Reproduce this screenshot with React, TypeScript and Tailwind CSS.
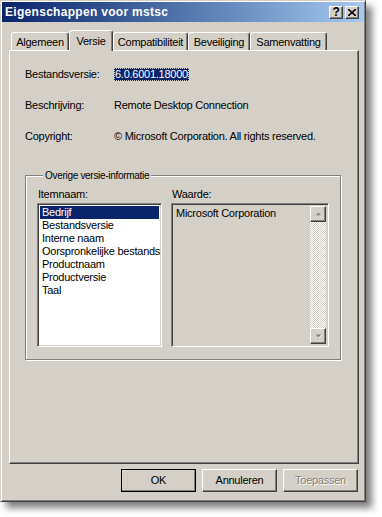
import { useState } from "react";

const raised =
  "border border-t-white border-l-white border-r-[#404040] border-b-[#404040] shadow-[inset_-1px_-1px_#808080]";
const sunken =
  "border border-t-[#808080] border-l-[#808080] border-r-white border-b-white shadow-[inset_1px_1px_#404040,inset_-1px_-1px_#d4d0c8]";

const tabs = [
  { label: "Algemeen", w: "w-[58px]" },
  { label: "Versie", w: "w-[44px]" },
  { label: "Compatibiliteit", w: "w-[75px]" },
  { label: "Beveiliging", w: "w-[62px]" },
  { label: "Samenvatting", w: "w-[77px]" },
];

const items = [
  "Bedrijf",
  "Bestandsversie",
  "Interne naam",
  "Oorspronkelijke bestands",
  "Productnaam",
  "Productversie",
  "Taal",
];

const CaptionButton = ({ children }: { children: React.ReactNode }) => (
  <div
    className={`w-[14px] h-[13px] bg-[#d4d0c8] flex items-center justify-center text-black font-bold text-[12px] leading-none ${raised}`}
  >
    {children}
  </div>
);

const ScrollButton = ({ up }: { up?: boolean }) => (
  <div
    className={`w-[16px] h-[16px] bg-[#d4d0c8] flex items-center justify-center ${raised}`}
  >
    <svg width="7" height="5" viewBox="0 0 7 5">
      {up ? (
        <>
          <path d="M4 1 L7 4 L1 4 Z" fill="#fff" />
          <path d="M3.5 0.5 L6.5 3.5 L0.5 3.5 Z" fill="#808080" />
        </>
      ) : (
        <>
          <path d="M1 1 L7 1 L4 4 Z" fill="#fff" />
          <path d="M0.5 0.5 L6.5 0.5 L3.5 3.5 Z" fill="#808080" />
        </>
      )}
    </svg>
  </div>
);

const DialogButton = ({
  label,
  isDefault,
  disabled,
}: {
  label: string;
  isDefault?: boolean;
  disabled?: boolean;
}) => (
  <button
    className={`w-[75px] h-[23px] bg-[#d4d0c8] ${
      isDefault ? "outline outline-1 outline-black -outline-offset-1 " : ""
    }${raised} ${
      disabled ? "text-[#808080] [text-shadow:1px_1px_#fff]" : "text-black"
    }`}
  >
    {label}
  </button>
);

const App = () => {
  const [selected, setSelected] = useState(0);

  return (
    <div className="w-[382px] h-[517px] bg-white font-['Liberation_Sans',Arial,sans-serif] text-[11px] tracking-[-0.25px] text-black">
      <div className="w-[366px] h-[502px] bg-[#d4d0c8] p-[1px] border border-t-[#d4d0c8] border-l-[#d4d0c8] border-r-[#404040] border-b-[#404040] shadow-[inset_1px_1px_#fff,inset_-1px_-1px_#808080,6px_6px_7px_rgba(0,0,0,0.5)] flex flex-col">
        {/* title bar */}
        <div className="h-[20px] flex items-center pl-[3px] pr-[5px] bg-gradient-to-r from-[#0a246a] to-[#a6caf0]">
          <span className="text-white font-bold text-[12px] tracking-[0.3px]">
            Eigenschappen voor mstsc
          </span>
          <div className="ml-auto flex gap-[2px]">
            <CaptionButton>?</CaptionButton>
            <CaptionButton>
              <svg width="8" height="7" viewBox="0 0 8 7">
                <path d="M0 0 L8 7 M8 0 L0 7" stroke="#000" strokeWidth="1.6" />
              </svg>
            </CaptionButton>
          </div>
        </div>

        {/* tabs */}
        <div className="mt-[8px] h-[20px] flex items-end pl-[9px]">
          {tabs.map((t, i) =>
            i === 1 ? (
              <div
                key={t.label}
                className={`${t.w} h-[21px] -mb-[1px] relative z-10 bg-[#d4d0c8] rounded-t-[3px] border-t border-l border-r border-t-white border-l-white border-r-[#404040] shadow-[inset_-1px_0_#808080] flex items-start justify-center pt-[2px]`}
              >
                {t.label}
              </div>
            ) : (
              <div
                key={t.label}
                className={`${t.w} h-[18px] rounded-t-[3px] border-t border-l border-r border-t-white border-l-white border-r-[#404040] shadow-[inset_-1px_0_#808080] flex items-center justify-center pt-[1px]`}
              >
                {t.label}
              </div>
            )
          )}
        </div>

        {/* tab panel */}
        <div className={`ml-[7px] w-[350px] h-[414px] ${raised} flex flex-col`}>
          <div className="pl-[15px] pt-[17px] flex flex-col gap-[18px]">
            <div className="flex h-[13px] items-center">
              <span className="w-[89px]">Bestandsversie:</span>
              <span className="bg-[#0a246a] text-white px-[1px] leading-[13px] outline outline-1 outline-dotted outline-[#d4d0c8] -outline-offset-1">
                6.0.6001.18000
              </span>
            </div>
            <div className="flex h-[13px] items-center">
              <span className="w-[89px]">Beschrijving:</span>
              <span>Remote Desktop Connection</span>
            </div>
            <div className="flex h-[13px] items-center">
              <span className="w-[89px]">Copyright:</span>
              <span>© Microsoft Corporation. All rights reserved.</span>
            </div>
          </div>

          {/* group box */}
          <fieldset className="ml-[15px] mt-[26px] w-[316px] h-[191px] border border-[#808080] shadow-[inset_1px_1px_#fff,1px_1px_#fff] px-[11px]">
            <legend className="ml-[6px] px-[2px] bg-[#d4d0c8] leading-[13px] text-[10px] tracking-[-0.3px]">
              Overige versie-informatie
            </legend>
            <div className="flex gap-[9px] mt-[6px]">
              <div className="flex flex-col">
                <span className="leading-[13px] pl-[1px]">Itemnaam:</span>
                <div className={`mt-[2px] w-[125px] h-[144px] bg-white p-[2px] overflow-hidden ${sunken}`}>
                  {items.map((it, i) => (
                    <div
                      key={it}
                      onClick={() => setSelected(i)}
                      className={`h-[13px] leading-[13px] pl-[2px] whitespace-nowrap ${
                        selected === i ? "bg-[#0a246a] text-white" : ""
                      }`}
                    >
                      {it}
                    </div>
                  ))}
                </div>
              </div>
              <div className="flex flex-col">
                <span className="leading-[13px] pl-[1px]">Waarde:</span>
                <div className={`mt-[2px] w-[158px] h-[144px] p-[2px] flex ${sunken}`}>
                  <div className="flex-1 pl-[2px] pt-[1px] leading-[13px]">
                    Microsoft Corporation
                  </div>
                  <div className="w-[16px] flex flex-col bg-[repeating-conic-gradient(#fff_0_25%,#d4d0c8_0_50%)] bg-[length:2px_2px]">
                    <ScrollButton up />
                    <div className="flex-1" />
                    <ScrollButton />
                  </div>
                </div>
              </div>
            </div>
          </fieldset>
        </div>

        {/* buttons */}
        <div className="mt-[5px] ml-[119px] flex gap-[6px]">
          <DialogButton label="OK" isDefault />
          <DialogButton label="Annuleren" />
          <DialogButton label="Toepassen" disabled />
        </div>
      </div>
    </div>
  );
};

export default App;
